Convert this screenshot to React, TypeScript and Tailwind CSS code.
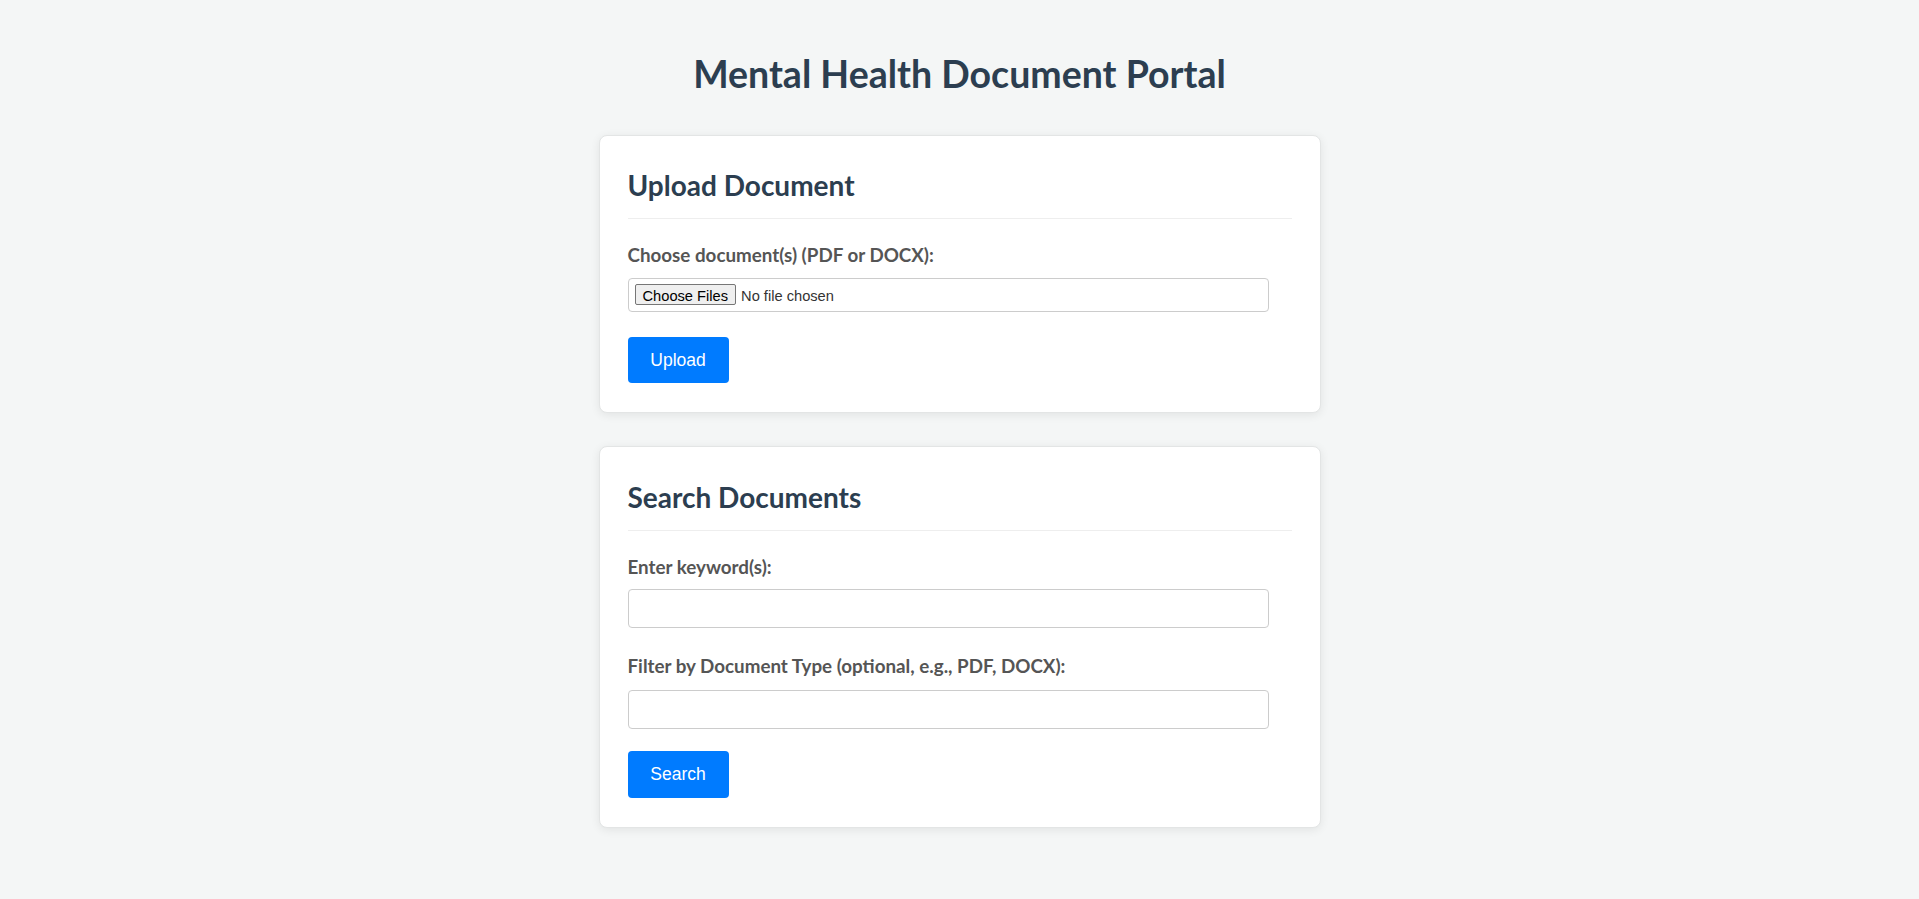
export default function App() {
  return (
    <div className="min-h-screen bg-[#f4f6f6] flex flex-col items-center font-['Lato',sans-serif]">
      <h1 className="mt-[51px] text-[37.5px] leading-[1.2] font-bold text-[#2c3e50]">
        Mental Health Document Portal
      </h1>

      <div className="mt-[39px] w-[722px] flex flex-col gap-[33px]">
        {/* Upload */}
        <section className="bg-white border border-[#e3e5e5] rounded-[8px] shadow-[0_2px_10px_rgba(0,0,0,0.08)] px-[28px] pt-[33px] pb-[29px]">
          <h2 className="text-[28px] leading-[1.2] font-bold text-[#2c3e50] pb-[15px] border-b border-[#eeeeee]">
            Upload Document
          </h2>
          <label className="block mt-[25px] text-[18.8px] leading-[1.2] font-bold text-[#555555]">
            Choose document(s) (PDF or DOCX):
          </label>
          <input
            type="file"
            multiple
            className="block mt-[12px] w-[641px] h-[34px] border border-[#cccccc] rounded-[4px] bg-white px-[6px] py-[5px] text-[14.67px] font-['Liberation_Sans',Arial,sans-serif] text-[#333333] file:mr-[5px] file:px-[7px] file:h-[21px] file:border file:border-[#767676] file:rounded-[2px] file:bg-[#efefef] file:text-black"
          />
          <button className="block mt-[25px] w-[101px] h-[46px] bg-[#007bff] text-white rounded-[4px] text-[17.5px] font-['Liberation_Sans',Arial,sans-serif]">
            Upload
          </button>
        </section>

        {/* Search */}
        <section className="bg-white border border-[#e3e5e5] rounded-[8px] shadow-[0_2px_10px_rgba(0,0,0,0.08)] px-[28px] pt-[34px] pb-[29px]">
          <h2 className="text-[28px] leading-[1.2] font-bold text-[#2c3e50] pb-[15px] border-b border-[#eeeeee]">
            Search Documents
          </h2>
          <label className="block mt-[25px] text-[18.8px] leading-[1.2] font-bold text-[#555555]">
            Enter keyword(s):
          </label>
          <input
            type="text"
            className="block mt-[11px] w-[641px] h-[39px] border border-[#cccccc] rounded-[4px] bg-white px-[10px]"
          />
          <label className="block mt-[27px] text-[18.8px] leading-[1.2] font-bold text-[#555555]">
            Filter by Document Type (optional, e.g., PDF, DOCX):
          </label>
          <input
            type="text"
            className="block mt-[12px] w-[641px] h-[39px] border border-[#cccccc] rounded-[4px] bg-white px-[10px]"
          />
          <button className="block mt-[22px] w-[101px] h-[47px] bg-[#007bff] text-white rounded-[4px] text-[17.5px] font-['Liberation_Sans',Arial,sans-serif]">
            Search
          </button>
        </section>
      </div>
    </div>
  );
}
